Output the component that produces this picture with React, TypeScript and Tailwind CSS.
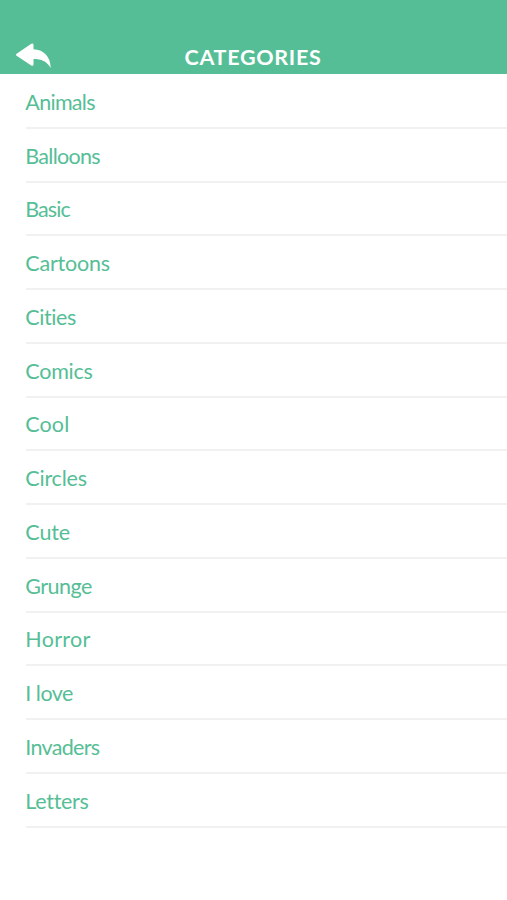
const categories = [
  { name: 'Animals', tracking: 'tracking-[-0.7px]' },
  { name: 'Balloons', tracking: 'tracking-[-0.7px]' },
  { name: 'Basic', tracking: 'tracking-[-0.95px]' },
  { name: 'Cartoons', tracking: 'tracking-[-0.2px]' },
  { name: 'Cities', tracking: 'tracking-[-0.4px]' },
  { name: 'Comics', tracking: 'tracking-[-0.25px]' },
  { name: 'Cool', tracking: 'tracking-[0.1px]' },
  { name: 'Circles', tracking: 'tracking-[-0.2px]' },
  { name: 'Cute', tracking: 'tracking-[-0.1px]' },
  { name: 'Grunge', tracking: 'tracking-[-0.55px]' },
  { name: 'Horror', tracking: 'tracking-[0.3px]' },
  { name: 'I love', tracking: 'tracking-[-0.5px]' },
  { name: 'Invaders', tracking: 'tracking-[-0.7px]' },
  { name: 'Letters', tracking: 'tracking-[-0.3px]' },
]

function App() {
  return (
    <div className="h-[900px] overflow-hidden bg-white font-['Lato',sans-serif]">
      {/* Header */}
      <header className="grid h-[74px] grid-cols-[1fr_auto_1fr] items-end bg-[#55be96] text-white">
        <button className="mb-[6px] ml-[16px] w-[35px]" aria-label="Back">
          <svg viewBox="0 0 35 25" className="h-[25px] w-[35px]" fill="currentColor">
            <path d="M.6 10.700 15.300.8Q17.500-.3 17.500 1.900V6.300C27 6.500 34.700 13.300 34.700 25 30.500 18 25.500 16 17.500 16V21.300Q17.500 23.500 15.300 22.500L.6 12.700Q-.6 11.700.6 10.700Z" />
          </svg>
        </button>
        <h1 className="mr-px mb-[3px] text-[21.5px] leading-[28px] font-bold tracking-[0.7px]">CATEGORIES</h1>
      </header>

      {/* Category list */}
      <ul className="pt-[1.1px] pl-[26px]">
        {categories.map(({ name, tracking }) => (
          <li
            key={name}
            className="flex h-[53.75px] items-center border-b-2 border-[#f1f1f1] pt-[2px] text-[21.5px] text-[#55be96]"
          >
            <span className={`-ml-[0.7px] ${tracking}`}>{name}</span>
          </li>
        ))}
      </ul>
    </div>
  )
}

export default App
